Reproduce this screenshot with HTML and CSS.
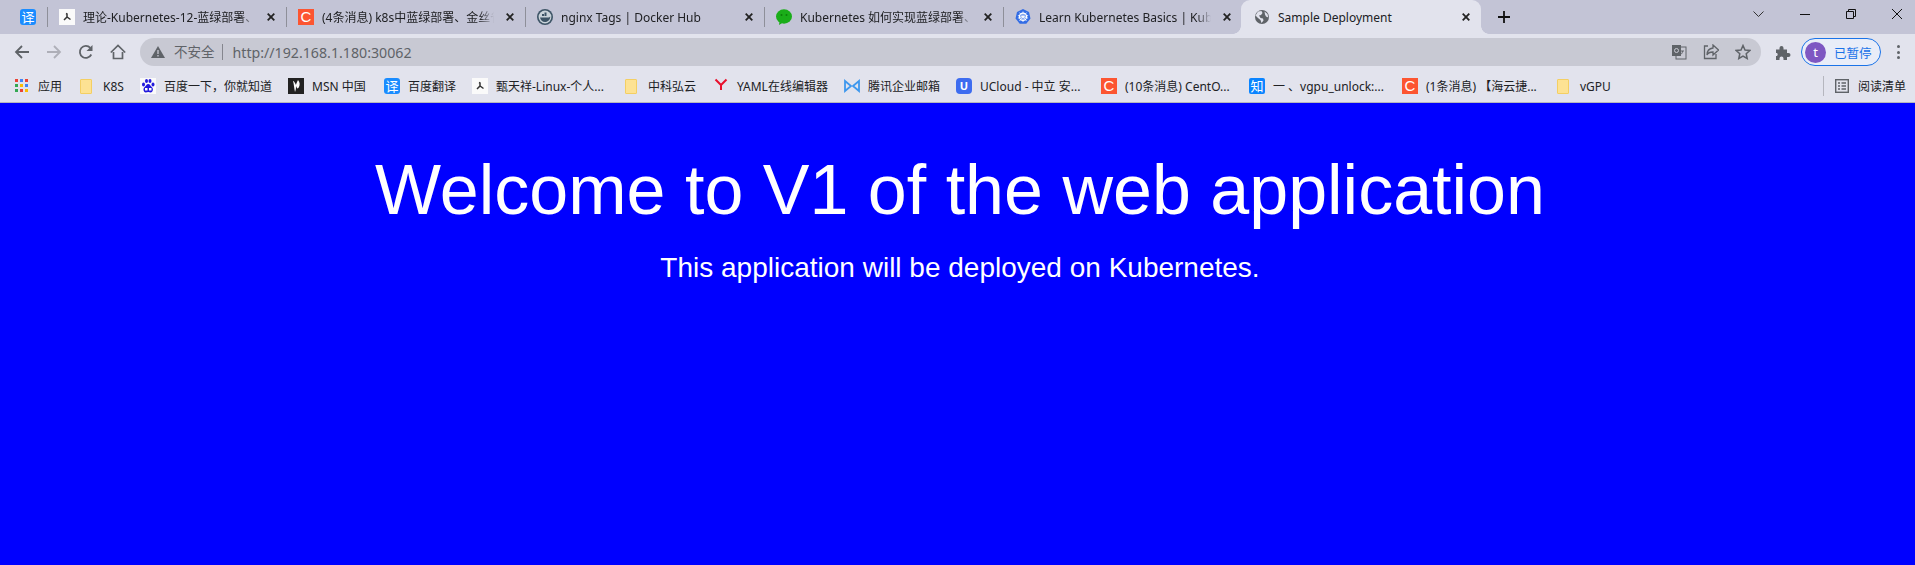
FILE: index.html
```html
<!DOCTYPE html>
<html lang="zh">
<head>
<meta charset="utf-8">
<title>Sample Deployment</title>
<link rel="stylesheet" href="styles.css">
</head>
<body>
<header class="chrome">
  <div class="strip">
    <div class="tab pinned"><span class="fav fav-blue">译</span></div>
    <div class="tab"><span class="fav fav-white"><svg viewBox="0 0 16 16" width="16" height="16"><path d="M7 4.500l1 .5v3M5 11l3-3 3.500 2.500" fill="none" stroke="#333" stroke-width="1.500"/></svg></span><span class="tab-title">理论-Kubernetes-12-蓝绿部署、</span><svg class="x" viewBox="0 0 8 8" width="8" height="8"><path d="M.7.7l6.600 6.600M7.300.7.700 7.300" stroke="#222" stroke-width="1.800"/></svg></div>
    <div class="tab"><span class="fav fav-c">C</span><span class="tab-title">(4条消息) k8s中蓝绿部署、金丝雀</span><svg class="x" viewBox="0 0 8 8" width="8" height="8"><path d="M.7.7l6.600 6.600M7.300.7.700 7.300" stroke="#222" stroke-width="1.800"/></svg></div>
    <div class="tab"><span class="fav"><svg viewBox="0 0 16 16" width="16" height="16"><circle cx="8" cy="8" r="8" fill="#3d5466"/><circle cx="8" cy="8" r="6.400" fill="#c9d3da"/><path d="M3 8.500h8.600c.6 0 1.200-.5 1.600-1 .3 2.800-2.200 5.500-5.200 5.500-2.600 0-4.500-2-5-4.500zM5 5h2v2H5zM7.500 3.500h2V7h-2z" fill="#3d5466"/></svg></span><span class="tab-title">nginx Tags | Docker Hub</span><svg class="x" viewBox="0 0 8 8" width="8" height="8"><path d="M.7.7l6.600 6.600M7.300.7.700 7.300" stroke="#222" stroke-width="1.800"/></svg></div>
    <div class="tab"><span class="fav"><svg viewBox="0 0 16 16" width="16" height="16"><ellipse cx="8" cy="7.500" rx="8" ry="7.200" fill="#1aad19"/><path d="M3.500 12.500 3 16l4-2.500z" fill="#1aad19"/><circle cx="5.500" cy="6" r="1" fill="#0b7d0a"/><circle cx="10.500" cy="6" r="1" fill="#0b7d0a"/></svg></span><span class="tab-title">Kubernetes 如何实现蓝绿部署、</span><svg class="x" viewBox="0 0 8 8" width="8" height="8"><path d="M.7.7l6.600 6.600M7.300.7.700 7.300" stroke="#222" stroke-width="1.800"/></svg></div>
    <div class="tab"><span class="fav"><svg viewBox="0 0 16 16" width="16" height="16"><path d="M8 0l6 2.900 1.500 6.500-4.200 5.300H4.700L.5 9.400 2 2.900z" fill="#326ce5"/><circle cx="8" cy="7.800" r="3.600" fill="none" stroke="#fff" stroke-width="1.200"/><path d="M8 2.500v10.500M2.900 6.500l10.200 2.600M13.100 6.500 2.900 9.100M4.500 12 11.500 3.600M11.500 12 4.500 3.600" stroke="#fff" stroke-width=".8"/></svg></span><span class="tab-title">Learn Kubernetes Basics | Kube</span><svg class="x" viewBox="0 0 8 8" width="8" height="8"><path d="M.7.7l6.600 6.600M7.300.7.700 7.300" stroke="#222" stroke-width="1.800"/></svg></div>
    <div class="tab active"><span class="fav globe"><svg viewBox="0 0 16 16" width="16" height="16"><circle cx="8" cy="8" r="7" fill="#5f6368"/><path d="M4 2.500 7.500 2l1 2-1.500 2-2 .5L6.500 9 9 9.500l.5 2-2 2.500-1-3-2.500-2L1.500 6.500zM10.500 2.500l3 2.500.8 3.500-2.300-1-1-2z" fill="#e2e3ed"/></svg></span><span class="tab-title">Sample Deployment</span><svg class="x" viewBox="0 0 8 8" width="8" height="8"><path d="M.7.7l6.600 6.600M7.300.7.700 7.300" stroke="#222" stroke-width="1.800"/></svg></div>
    <span class="newtab"><svg viewBox="0 0 14 14" width="14" height="14"><path d="M7 1v12M1 7h12" stroke="#111" stroke-width="1.800"/></svg></span>
    <div class="winctl">
      <svg class="wc wc-search" viewBox="0 0 11 6" width="11" height="6"><path d="M.5.5l5 5 5-5" fill="none" stroke="#333"/></svg>
      <svg class="wc wc-min" viewBox="0 0 10 1" width="10" height="1"><path d="M0 .5h10" stroke="#111"/></svg>
      <svg class="wc wc-max" viewBox="0 0 10 10" width="10" height="10"><path d="M2.500 2.500V.5h7v7h-2M.5 2.500h7v7h-7z" fill="none" stroke="#111"/></svg>
      <svg class="wc wc-close" viewBox="0 0 10 10" width="10" height="10"><path d="M0 0l10 10M10 0 0 10" stroke="#111"/></svg>
    </div>
  </div>

  <div class="toolbar">
    <div class="nav">
      <svg viewBox="0 0 16 16" width="16" height="16"><path d="M15 8H2M8 2 2 8l6 6" fill="none" stroke="#5f6368" stroke-width="1.800"/></svg>
      <svg viewBox="0 0 16 16" width="16" height="16"><path d="M1 8h13M8 2l6 6-6 6" fill="none" stroke="#aeafb8" stroke-width="1.800"/></svg>
      <svg viewBox="0 0 16 16" width="16" height="16"><path d="M13.300 10.500A6 6 0 1 1 12.300 3.800" fill="none" stroke="#5f6368" stroke-width="1.800"/><path d="M14.500 1v6h-6z" fill="#5f6368"/></svg>
      <svg viewBox="0 0 16 16" width="16" height="16"><path d="M3.500 8v6.500h9V8M.8 8.500 8 1.500l7.200 7" fill="none" stroke="#5f6368" stroke-width="1.700"/></svg>
    </div>
    <div class="omnibox">
      <svg class="warn" viewBox="0 0 14 12" width="14" height="12"><path d="M7 0l7 12H0z" fill="#5f6368"/><path d="M7 4v4M7 9v1.500" stroke="#c8c9d3" stroke-width="1.300"/></svg>
      <span class="insecure">不安全</span>
      <span class="url">http://192.168.1.180:30062</span>
      <div class="omni-icons">
        <svg viewBox="0 0 16 16" width="16" height="16"><rect x="5" y="3" width="10" height="12" fill="#c8c9d3" stroke="#5f6368"/><rect x="1" y="1" width="9" height="11" fill="#5f6368"/><circle cx="5.500" cy="6.500" r="2" fill="none" stroke="#c8c9d3"/><path d="M10 7h3M11.500 7c0 2-1 3-2 3.500" stroke="#5f6368" fill="none"/></svg>
        <svg viewBox="0 0 16 16" width="16" height="16"><path d="M5 2H1.500v12.500h11.500V10" fill="none" stroke="#5f6368" stroke-width="1.300"/><path d="M10 1l5.500 5-5.500 5V8c-3 0-5 .5-6 3 0-4 2-6.500 6-7z" fill="none" stroke="#5f6368" stroke-width="1.300"/></svg>
        <svg viewBox="0 0 16 16" width="16" height="16"><path d="M8 1.500l2 4.500 4.800.5-3.600 3.200 1 4.800L8 12.100l-4.200 2.400 1-4.800L1.200 6.500 6 6z" fill="none" stroke="#5f6368" stroke-width="1.500"/></svg>
      </div>
    </div>
    <svg class="ext" viewBox="0 0 16 16" width="16" height="16"><path d="M1 5.500h3.500V4a2 2 0 0 1 4 0v1.500H12V9h1.500a2 2 0 0 1 0 4H12v3H8.500v-1.500a2 2 0 0 0-4 0V16H1v-4h1a2.200 2.200 0 0 0 0-3H1z" fill="#5f6368"/></svg>
    <div class="profile"><span class="avatar">t</span><span class="paused">已暂停</span></div>
    <span class="kebab"><i></i><i></i><i></i></span>
  </div>

  <nav class="bookmarks">
    <a class="bm"><svg class="bm-icon" viewBox="0 0 14 14" width="14" height="14"><g><rect width="3" height="3" fill="#ea4335"/><rect x="5" width="3" height="3" fill="#4285f4"/><rect x="10" width="3" height="3" fill="#ea4335"/><rect y="5" width="3" height="3" fill="#34a853"/><rect x="5" y="5" width="3" height="3" fill="#fbbc05"/><rect x="10" y="5" width="3" height="3" fill="#4285f4"/><rect y="10" width="3" height="3" fill="#34a853"/><rect x="5" y="10" width="3" height="3" fill="#ea4335"/><rect x="10" y="10" width="3" height="3" fill="#fbbc05"/></g></svg>应用</a>
    <a class="bm folder-bm"><span class="folder"></span>K8S</a>
    <a class="bm"><span class="fav fav-white"><svg viewBox="0 0 16 16" width="16" height="16"><g fill="#2319dc"><ellipse cx="3.500" cy="6.500" rx="1.500" ry="2"/><ellipse cx="6.500" cy="3" rx="1.500" ry="2"/><ellipse cx="10" cy="3" rx="1.500" ry="2"/><ellipse cx="13" cy="6.500" rx="1.500" ry="2"/><path d="M8.200 6c-2 0-2 2-4 3.500-1.500 1.500-.5 5 1.500 5 1 0 1.500-.4 2.500-.4s1.500.4 2.500.4c2 0 3-3.500 1.500-5-2-1.500-2-3.500-4-3.500z"/></g><path d="M5 10h2.500v2.500H5zM9 10h2.500v2.500H9z" fill="#fff"/></svg></span>百度一下，你就知道</a>
    <a class="bm"><span class="fav"><svg viewBox="0 0 16 16" width="16" height="16"><rect width="16" height="16" fill="#222"/><path d="M5 3c1 3 1 7 2 11 1-2 1-5 1-6 1 3 2 3 3 1 1-2 1-5-1-7-1 2-2 4-2 5-1-2-2-4-3-4z" fill="#fff"/></svg></span>MSN 中国</a>
    <a class="bm"><span class="fav fav-blue">译</span>百度翻译</a>
    <a class="bm"><span class="fav fav-white"><svg viewBox="0 0 16 16" width="16" height="16"><path d="M7 4.500l1 .5v3M5 11l3-3 3.500 2.500" fill="none" stroke="#333" stroke-width="1.500"/></svg></span>甄天祥-Linux-个人...</a>
    <a class="bm folder-bm"><span class="folder"></span>中科弘云</a>
    <a class="bm"><span class="fav"><svg viewBox="0 0 16 16" width="16" height="16"><path d="M2.500 1.500 8 7l5.500-5.500M8 7v5" fill="none" stroke="#e8112d" stroke-width="2"/></svg></span>YAML在线编辑器</a>
    <a class="bm"><span class="fav"><svg viewBox="0 0 16 16" width="16" height="16"><path d="M1 3l6 5-6 5zM15 3 9 8l6 5z" fill="none" stroke="#3d97ee" stroke-width="1.800"/></svg></span>腾讯企业邮箱</a>
    <a class="bm"><span class="fav fav-u">U</span>UCloud - 中立 安...</a>
    <a class="bm"><span class="fav fav-c">C</span>(10条消息) CentO...</a>
    <a class="bm"><span class="fav fav-zhi">知</span>一 、vgpu_unlock:...</a>
    <a class="bm"><span class="fav fav-c">C</span>(1条消息) 【海云捷...</a>
    <a class="bm folder-bm"><span class="folder"></span>vGPU</a>
    <div class="reading"><svg viewBox="0 0 14 14" width="14" height="14"><rect x=".7" y=".7" width="12.600" height="12.600" fill="none" stroke="#5f6368" stroke-width="1.400"/><path d="M3 4h2M3 7h2M3 10h2M6.500 4H11M6.500 7H11M6.500 10H11" stroke="#5f6368" stroke-width="1.300"/></svg>阅读清单</div>
  </nav>
</header>

<main class="page">
  <h1>Welcome to V1 of the web application</h1>
  <p>This application will be deployed on Kubernetes.</p>
</main>
</body>
</html>
```

FILE: styles.css
```css
* { box-sizing: border-box; }
html, body { margin: 0; height: 100%; }
body {
  display: flex;
  flex-direction: column;
  height: 565px;
  overflow: hidden;
  background: #0000ff;
  font-family: "Noto Sans", "Noto Sans CJK SC", sans-serif;
  font-size: 12px;
  color: #202124;
}
svg { display: block; flex: none; }

.chrome { flex: none; }

.strip {
  display: flex;
  height: 34px;
  background: #c3c4d6;
}
.tab {
  position: relative;
  display: flex;
  align-items: center;
  flex: none;
  width: 239px;
  padding: 0 11px 0 12px;
}
.tab.pinned { width: 47px; padding: 0 0 0 20px; }
.tab::after {
  content: "";
  position: absolute;
  right: -1px;
  top: 7px;
  width: 1px;
  height: 20px;
  background: #8e8f99;
}
.tab.active {
  width: 240px;
  margin-left: -1px;
  padding-left: 13px;
  background: #e2e3ed;
  border-radius: 9px 9px 0 0;
}
.tab.active::after { display: none; }
.tab.active::before,
.newtab::before {
  content: "";
  position: absolute;
  bottom: 0;
  width: 8px;
  height: 8px;
}
.tab.active::before {
  left: -8px;
  background: radial-gradient(circle at 0 0, transparent 7.500px, #e2e3ed 8px);
}
.newtab::before {
  left: 0;
  background: radial-gradient(circle at 100% 0, transparent 7.500px, #e2e3ed 8px);
}
.fav {
  display: flex;
  align-items: center;
  justify-content: center;
  flex: none;
  width: 16px;
  height: 16px;
  font-size: 11px;
  line-height: 16px;
  overflow: hidden;
}
.fav-blue { background: #1a8cff; color: #fff; border-radius: 3px; font-size: 13px; }
.fav-zhi { background: #0a84ff; color: #fff; border-radius: 2px; font-size: 13px; }
.fav-white { background: #fafafa; }
.fav-c { background: #fc5531; color: #fff; font-size: 15px; font-family: "Liberation Sans", sans-serif; }
.fav-u { background: #3d6cf0; color: #fff; border-radius: 4px; font-weight: 700; }
.tab-title {
  flex: 1;
  min-width: 0;
  margin-left: 8px;
  white-space: nowrap;
  -webkit-mask-image: linear-gradient(to right, #000 calc(100% - 14px), transparent);
  mask-image: linear-gradient(to right, #000 calc(100% - 14px), transparent);
}
.active .tab-title { -webkit-mask-image: none; mask-image: none; }
.x { margin-left: 12px; }
.newtab {
  position: relative;
  display: flex;
  align-items: center;
  padding-left: 16px;
}
.winctl {
  display: flex;
  align-items: flex-start;
  margin-left: auto;
  padding: 9px 13px 0 0;
}
.wc-search { margin: 2px 36px 0 0; }
.wc-min { margin: 5px 36px 0 0; }
.wc-max { margin: 0 36px 0 0; }

.toolbar {
  display: flex;
  align-items: center;
  height: 36px;
  background: #e2e3ed;
}
.nav {
  display: flex;
  gap: 16px;
  padding-left: 14px;
  width: 140px;
}
.omnibox {
  display: flex;
  align-items: center;
  width: 1621px;
  height: 28px;
  padding: 0 10px 0 11px;
  border-radius: 14px;
  background: #c8c9d3;
  color: #5f6368;
  font-size: 14px;
}
.insecure {
  margin-left: 9px;
  padding-right: 7px;
  border-right: 1px solid #85868e;
  font-size: 13.500px;
  line-height: 16px;
}
.url { margin-left: 10px; font-size: 14.200px; }
.omni-icons {
  display: flex;
  gap: 16px;
  margin-left: auto;
}
.ext { margin-left: 14px; }
.profile {
  display: flex;
  align-items: center;
  width: 80px;
  height: 28px;
  margin-left: 10px;
  padding-left: 3px;
  border: 1.500px solid #1a73e8;
  border-radius: 14px;
  background: #e9edf8;
}
.avatar {
  width: 21px;
  height: 21px;
  border-radius: 50%;
  background: #7e57c2;
  color: #fff;
  text-align: center;
  line-height: 20px;
  font-size: 13px;
}
.paused { margin-left: 8px; color: #1a73e8; font-size: 12.500px; }
.kebab {
  display: flex;
  flex-direction: column;
  gap: 2.500px;
  margin-left: 16px;
}
.kebab i {
  display: block;
  width: 3px;
  height: 3px;
  border-radius: 50%;
  background: #5f6368;
}

.bookmarks {
  display: flex;
  align-items: center;
  height: 33px;
  padding-left: 7px;
  background: #e2e3ed;
  border-bottom: 1px solid #b5b6be;
  white-space: nowrap;
  color: #202124;
}
.bm {
  display: flex;
  align-items: center;
  flex: none;
  gap: 8px;
  padding: 0 8px;
  font-size: 12px;
}
.bm:nth-child(1) { width: 63px; }
.bm:nth-child(2) { width: 62px; }
.bm:nth-child(3) { width: 148px; }
.bm:nth-child(4) { width: 96px; }
.bm:nth-child(5) { width: 88px; }
.bm:nth-child(6) { width: 151px; }
.bm:nth-child(7) { width: 90px; }
.bm:nth-child(8) { width: 131px; }
.bm:nth-child(9) { width: 112px; }
.bm:nth-child(10) { width: 145px; }
.bm:nth-child(11) { width: 148px; }
.bm:nth-child(12) { width: 153px; }
.bm:nth-child(13) { width: 153px; }
.bm-icon { margin-right: 1px; }
.folder-bm { gap: 11px; padding-left: 10px; }
.folder {
  display: block;
  width: 12px;
  height: 15px;
  background: #fde293;
  border: 1px solid #f4cf63;
  border-radius: 1px;
}
.reading {
  display: flex;
  align-items: center;
  gap: 9px;
  margin-left: auto;
  padding: 0 9px 0 11px;
  height: 20px;
  border-left: 1px solid #b5b6be;
  font-size: 12px;
}

.page {
  flex: 1;
  padding-left: 5px;
  background: #0000ff;
  color: #fff;
  text-align: center;
  font-family: "Liberation Sans", Arial, sans-serif;
}
.page h1 {
  margin: 47px 0 0;
  font-size: 70px;
  font-weight: 400;
  line-height: 80px;
}
.page p {
  margin: 22px 0 0;
  font-size: 28px;
  line-height: 32px;
}
```
